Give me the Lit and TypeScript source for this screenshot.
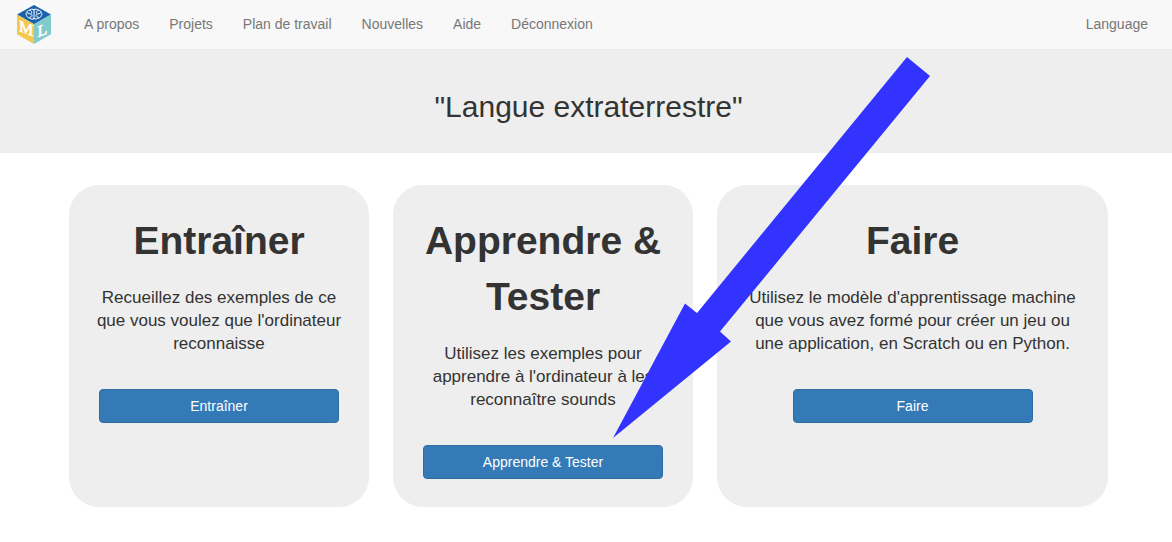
import { LitElement, html, css } from "lit";
import { customElement, property } from "lit/decorators.js";

@customElement("cube-logo")
class CubeLogo extends LitElement {
  static styles = css`
    :host {
      display: block;
    }
    .cube {
      display: block;
      width: 36px;
      height: 40px;
    }
    .letter {
      font-family: "Liberation Serif", serif;
      font-weight: 400;
      font-size: 16px;
      fill: #fff;
      stroke: #fff;
      stroke-width: 0.6px;
      text-anchor: middle;
    }
  `;

  render() {
    return html`
      <svg class="cube" viewBox="0 0 36 40" aria-hidden="true">
        <path d="M18 0 35 9.5 18 19.2 1 9.5z" fill="#1a63ab" />
        <path d="M1 9.5 18 19.2V39L1 29.3z" fill="#f5c84c" />
        <path d="M35 9.5 18 19.2V39L35 29.3z" fill="#82cbca" />
        <g fill="none" stroke="#fff" stroke-width="1" stroke-linecap="round">
          <path d="M18 4.6c-1.6-.8-3.400-.5-4.200.6-2 .1-3 1.200-2.800 2.300-1.300.9-1.200 2.600 0 3.300.1 1.500 1.400 2.300 2.900 2.200 1 1.200 2.900 1.400 4.100.6 1.200.8 3.100.6 4.100-.6 1.500.1 2.800-.7 2.900-2.200 1.200-.7 1.300-2.400 0-3.300.2-1.100-.8-2.200-2.800-2.300-.8-1.100-2.600-1.400-4.200-.6z" />
          <path d="M18 4.600v9M13.800 5.200c1.600.7 2.300 1.700 1.800 3M22.200 5.200c-1.600.7-2.300 1.700-1.800 3M11 7.500c1 .9 2.400 1.200 4.200 1.800M25 7.500c-1 .9-2.400 1.200-4.200 1.800M13.900 13c.1-1.400 1-2.200 2.400-2.200M22.100 13c-.1-1.400-1-2.200-2.400-2.200" />
        </g>
        <text class="letter" transform="translate(10 28.500) skewY(20)">M</text>
        <text class="letter" transform="translate(26.500 30.500) skewY(-20)">L</text>
      </svg>
    `;
  }
}

@customElement("step-card")
class StepCard extends LitElement {
  @property() heading = "";
  @property() text = "";

  static styles = css`
    :host {
      display: flex;
      flex-direction: column;
      align-items: center;
      box-sizing: border-box;
      padding: 28px 26px;
      border-radius: 30px;
      background: #eee;
      text-align: center;
    }
    .heading {
      margin: 0 0 17px;
      font-size: 39px;
      line-height: 56px;
      font-weight: 700;
    }
    .text {
      margin: 0 0 34px;
      font-size: 17px;
      line-height: 23px;
    }
    .action {
      width: 240px;
      max-width: 100%;
      padding: 6px 12px;
      border: 1px solid #2e6da4;
      border-radius: 4px;
      background: #337ab7;
      color: #fff;
      font-family: inherit;
      font-size: 14px;
      line-height: 20px;
      cursor: pointer;
    }
    .action:hover {
      background: #286090;
    }
  `;

  render() {
    return html`
      <h2 class="heading">${this.heading}</h2>
      <p class="text">${this.text}</p>
      <button class="action" type="button">${this.heading}</button>
    `;
  }
}

@customElement("app-root")
class AppRoot extends LitElement {
  static styles = css`
    :host {
      display: block;
      position: relative;
      background: #fff;
      color: #333;
      font-family: "Liberation Sans", Arial, sans-serif;
      font-size: 14px;
      line-height: 20px;
    }
    .navbar {
      display: flex;
      align-items: center;
      padding: 0 9px 0 16px;
      border-bottom: 1px solid #e7e7e7;
      background: #f8f8f8;
    }
    .brand {
      margin-right: 17px;
    }
    .menu {
      display: flex;
      flex: 1;
      margin: 0;
      padding: 0;
      list-style: none;
    }
    .link {
      display: block;
      padding: 14px 15px 15px;
      color: #777;
      text-decoration: none;
    }
    .link:hover {
      color: #333;
    }
    .banner {
      padding: 40px 64px 30px 69px;
      background: #eee;
      text-align: center;
    }
    .title {
      margin: 0;
      font-size: 30px;
      line-height: 33px;
      font-weight: 400;
    }
    .steps {
      display: grid;
      grid-template-columns: 300px 300px 1fr;
      gap: 24px;
      padding: 32px 64px 35px 69px;
    }
    .pointer {
      position: absolute;
      left: 613px;
      top: 57px;
      width: 318px;
      height: 382px;
      pointer-events: none;
    }
  `;

  private links = ["A propos", "Projets", "Plan de travail", "Nouvelles", "Aide", "Déconnexion"];

  private steps = [
    {
      heading: "Entraîner",
      text: "Recueillez des exemples de ce que vous voulez que l'ordinateur reconnaisse",
    },
    {
      heading: "Apprendre & Tester",
      text: "Utilisez les exemples pour apprendre à l'ordinateur à les reconnaître sounds",
    },
    {
      heading: "Faire",
      text: "Utilisez le modèle d'apprentissage machine que vous avez formé pour créer un jeu ou une application, en Scratch ou en Python.",
    },
  ];

  render() {
    return html`
      <nav class="navbar">
        <a class="brand" href="#" aria-label="ML"><cube-logo></cube-logo></a>
        <ul class="menu">
          ${this.links.map((label) => html`<li><a class="link" href="#">${label}</a></li>`)}
        </ul>
        <a class="link" href="#">Language</a>
      </nav>
      <header class="banner">
        <h1 class="title">"Langue extraterrestre"</h1>
      </header>
      <main class="steps">
        ${this.steps.map(
          (step) => html`<step-card .heading=${step.heading} .text=${step.text}></step-card>`
        )}
      </main>
      <svg class="pointer" viewBox="0 0 318 382" aria-hidden="true">
        <path d="M0 381 72 246.500 84 256 294 0 317 19 107 274.500 118 284.500z" fill="#33f" />
      </svg>
    `;
  }
}
